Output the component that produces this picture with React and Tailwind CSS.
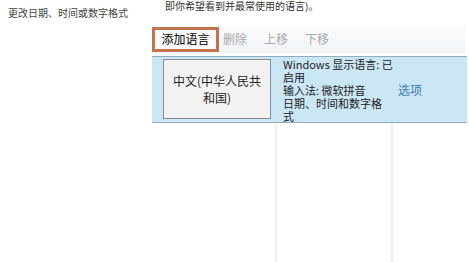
import React from "react";

const font = { fontFamily: '"Microsoft YaHei", "Noto Sans CJK SC", sans-serif' };

const App = () => {
  return (
    <div className="w-[469px] h-[262px] bg-white overflow-hidden flex text-[#333]" style={font}>
      {/* Sidebar */}
      <div className="w-[152px] shrink-0 pl-[8px] pt-[5px]">
        <p className="text-[10px] leading-[16px] text-[#444] whitespace-nowrap">更改日期、时间或数字格式</p>
      </div>

      {/* Main */}
      <div className="flex-1 flex flex-col">
        <p className="text-[10px] leading-[12px] pl-[13px] text-[#333] whitespace-nowrap">
          即你希望看到并最常使用的语言)。
        </p>

        {/* Toolbar */}
        <div className="mt-[13px] w-[313px] h-[28px] bg-gradient-to-b from-[#fbfcfd] to-[#f1f4f7] flex items-center">
          <button className="h-[25px] w-[67px] border-[3px] border-[#c3744f] bg-[#fafafa] text-[12px] text-black flex items-center justify-center">
            添加语言
          </button>
          <span className="ml-[4px] text-[12px] text-[#a8a8a8]">删除</span>
          <span className="ml-[17px] text-[12px] text-[#a8a8a8]">上移</span>
          <span className="ml-[17px] text-[12px] text-[#a8a8a8]">下移</span>
        </div>

        {/* Language list */}
        <div className="mt-[3px] w-[315px] flex-1 flex flex-col">
          <div className="h-[67px] bg-[#cbe7f5] border-t border-b border-[#8eaebd] flex">
            <div className="w-[125px] shrink-0 pl-[11px] pt-[2px]">
              <div className="w-[108px] h-[60px] bg-[#f2f2f2] border border-[#8c8c8c] flex flex-col items-center justify-center text-center text-[12px] leading-[17px] text-[#222]">
                <span className="whitespace-nowrap">中文(中华人民共</span>
                <span className="whitespace-nowrap">和国)</span>
              </div>
            </div>
            <div className="w-[116px] shrink-0 pl-[6px] text-[11px] leading-[13px] text-[#222] pt-[1px] whitespace-nowrap">
              <div>Windows 显示语言: 已</div>
              <div>启用</div>
              <div>输入法: 微软拼音</div>
              <div>日期、时间和数字格</div>
              <div>式</div>
            </div>
            <div className="flex-1 flex items-center pl-[5px]">
              <span className="text-[12px] text-[#3a7bb7]">选项</span>
            </div>
          </div>
          <div className="flex-1 flex">
            <div className="w-[125px] shrink-0 border-r-2 border-[#f0f0f0]"></div>
            <div className="w-[116px] shrink-0 border-r-2 border-[#f0f0f0]"></div>
            <div className="flex-1"></div>
          </div>
        </div>
      </div>
    </div>
  );
};

export default App;
